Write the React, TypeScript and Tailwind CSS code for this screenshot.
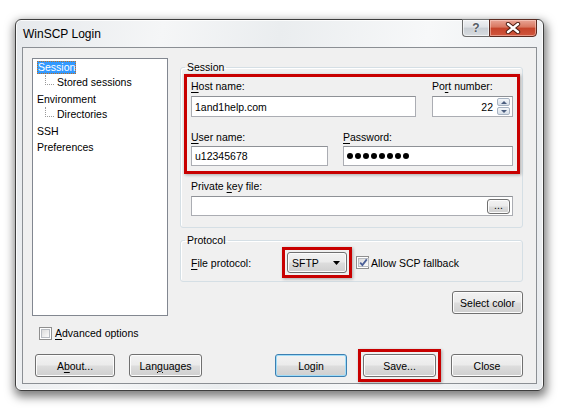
import React from "react";

const face =
  "flex items-center rounded-[3px] border border-[#707070] bg-[linear-gradient(to_bottom,#f2f2f2_0%,#ebebeb_48%,#dddddd_52%,#cfcfcf_100%)] shadow-[inset_0_0_0_1px_#fcfcfc] text-black";
const btn = `${face} justify-center h-[23px]`;

const field =
  "flex items-center bg-white border border-[#abadb3] border-t-[#8e9196] px-[3px]";

function Key({ children }: { children: React.ReactNode }) {
  return <span className="underline underline-offset-[2px]">{children}</span>;
}

function Checkbox({ checked }: { checked?: boolean }) {
  return (
    <span className="w-[13px] h-[13px] shrink-0 border border-[#8f8f8f] bg-white p-[1px] flex">
      <span className="flex-1 border border-[#b8bcc2] bg-[linear-gradient(135deg,#dcdcdc,#fbfbfb)] flex items-center justify-center">
        {checked && (
          <svg width="9" height="9" viewBox="0 0 9 9">
            <path d="M1.2 4.6 L3.4 7 L7.8 1.4" fill="none" stroke="#4a5f97" strokeWidth="1.8" />
          </svg>
        )}
      </span>
    </span>
  );
}

function Arrow({ up }: { up?: boolean }) {
  return (
    <span className="w-[13px] h-[8px] rounded-[2px] border border-[#a7b3c2] bg-[linear-gradient(to_bottom,#f4f7fa,#d6dee8)] flex items-center justify-center">
      <svg width="6" height="3" viewBox="0 0 6 3">
        <path d={up ? "M0 3 L3 0 L6 3 Z" : "M0 0 L3 3 L6 0 Z"} fill="#4a5d7e" />
      </svg>
    </span>
  );
}

function TreeChild({ label }: { label: string }) {
  return (
    <div className="h-[16px] flex items-start pl-[8px]">
      <span className="w-[9px] h-[10px] border-l border-b border-dotted border-[#9a9a9a]" />
      <span className="ml-[3px]">{label}</span>
    </div>
  );
}

export default function App() {
  return (
    <div className="w-[561px] h-[409px] bg-white pl-[15px] pt-[19px] font-['Liberation_Sans',Arial,sans-serif] text-[10.5px] leading-[14px] text-black">
      <div className="w-[529px] h-[372px] rounded-[6px] border border-[#3e3e3e] px-[6px] pb-[6px] flex flex-col bg-[linear-gradient(100deg,#e6e9ec_0%,#f5f6f7_25%,#eaedef_45%,#f7f8f9_70%,#e8ebee_100%)] shadow-[inset_0_0_0_1px_rgba(255,255,255,0.8),1px_4px_10px_2px_rgba(0,0,0,0.5)]">
        {/* title bar */}
        <div className="h-[27px] flex">
          <div className="flex-1 pl-[1px] pt-[7px] text-[12px]">WinSCP Login</div>
          <div className="flex -mt-[1px] h-[18px]">
            <div className="w-[27px] border border-[#6d6d6d] border-r-0 rounded-bl-[4px] bg-[linear-gradient(to_bottom,#f0f1f3_0%,#dfe2e6_45%,#c9ced4_50%,#d8dce0_100%)] shadow-[inset_0_0_0_1px_rgba(255,255,255,0.6)] flex items-center justify-center text-[12px] font-bold text-[#555b63] [text-shadow:0_0_2px_#fff]">
              ?
            </div>
            <div className="w-[48px] border border-[#5a2a20] rounded-br-[4px] bg-[linear-gradient(to_bottom,#e9a596_0%,#d8765f_45%,#c5432a_50%,#d0563d_100%)] shadow-[inset_0_0_0_1px_rgba(255,220,210,0.5)] flex items-center justify-center">
              <svg width="16" height="12" viewBox="0 0 16 12">
                <path d="M3 2 L13 10 M13 2 L3 10" stroke="#4a1c12" strokeWidth="4.4" strokeLinecap="round" />
                <path d="M3 2 L13 10 M13 2 L3 10" stroke="#ffffff" strokeWidth="2.4" strokeLinecap="round" />
              </svg>
            </div>
          </div>
        </div>

        {/* client area */}
        <div className="h-[337px] border border-[#8b8f94] bg-[#f0f0f0] pl-[9px] pt-[10px]">
          <div className="flex items-start">
            {/* left column */}
            <div className="flex flex-col">
              <div className="w-[136px] h-[258px] bg-white border border-[#828790] pl-[4px]">
                <div className="h-[16px] flex items-center">
                  <span className="bg-[#3399ff] text-white px-[1px] leading-[13px] outline-1 outline-dotted outline-[#c07020] -outline-offset-1">
                    Session
                  </span>
                </div>
                <TreeChild label="Stored sessions" />
                <div className="h-[16px] flex items-center">Environment</div>
                <TreeChild label="Directories" />
                <div className="h-[16px] flex items-center">SSH</div>
                <div className="h-[16px] flex items-center">Preferences</div>
              </div>
              <div className="mt-[10px] h-[14px] flex items-center pl-[7px]">
                <Checkbox />
                <span className="ml-[3px]">
                  <Key>A</Key>dvanced options
                </span>
              </div>
            </div>

            {/* right column */}
            <div className="ml-[12px] mt-[2px] w-[343px] flex flex-col">
              <fieldset className="border border-[#d5dfe5] rounded-[3px] shadow-[inset_1px_1px_0_#fff] pl-[3px] pr-[2px] pb-[11px]">
                <legend className="ml-[1px] px-[2px] leading-[14px]">Session</legend>
                <div className="border-[3px] border-[#c80000] px-[4px] pb-[5px] shadow-[1px_1px_3px_rgba(0,0,0,0.3)]">
                  <div className="flex">
                    <div className="w-[225px]">
                      <div className="h-[19px] pt-[2px]">
                        <Key>H</Key>ost name:
                      </div>
                      <div className={`${field} h-[21px]`}>1and1help.com</div>
                    </div>
                    <div className="ml-[16px] w-[81px]">
                      <div className="h-[19px] pt-[2px]">
                        Po<Key>r</Key>t number:
                      </div>
                      <div className={`${field} h-[21px] justify-end pr-[2px]`}>
                        <span>22</span>
                        <span className="ml-[4px] flex flex-col gap-[1px]">
                          <Arrow up />
                          <Arrow />
                        </span>
                      </div>
                    </div>
                  </div>
                  <div className="flex">
                    <div className="w-[137px]">
                      <div className="h-[29px] pt-[13px]">
                        <Key>U</Key>ser name:
                      </div>
                      <div className={`${field} h-[20px]`}>u12345678</div>
                    </div>
                    <div className="ml-[15px] w-[170px]">
                      <div className="h-[29px] pt-[13px]">
                        <Key>P</Key>assword:
                      </div>
                      <div className={`${field} h-[20px] gap-[2px]`}>
                        {[0, 1, 2, 3, 4, 5, 6, 7].map((i) => (
                          <span key={i} className="w-[6px] h-[6px] rounded-full bg-black" />
                        ))}
                      </div>
                    </div>
                  </div>
                </div>
                <div className="ml-[7px] h-[22px] pt-[5px]">
                  Private <Key>k</Key>ey file:
                </div>
                <div className={`${field} ml-[7px] mr-[7px] h-[20px] justify-end pr-[2px]`}>
                  <span className={`${face} justify-center w-[23px] h-[15px] leading-[10px] pb-[3px]`}>...</span>
                </div>
              </fieldset>

              <fieldset className="mt-[6px] border border-[#d5dfe5] rounded-[3px] shadow-[inset_1px_1px_0_#fff] pl-[10px] pb-[3px]">
                <legend className="-ml-[6px] px-[2px] leading-[13px]">Protocol</legend>
                <div className="flex items-center">
                  <span className="w-[91px]">
                    <Key>F</Key>ile protocol:
                  </span>
                  <div className="border-[3px] border-[#c80000] p-[2px] shadow-[1px_1px_3px_rgba(0,0,0,0.3)]">
                    <div className={`${face} w-[60px] h-[21px] justify-between pl-[4px] pr-[6px]`}>
                      <span>SFTP</span>
                      <svg width="7" height="4" viewBox="0 0 7 4">
                        <path d="M0 0 L7 0 L3.5 4 Z" fill="#000" />
                      </svg>
                    </div>
                  </div>
                  <span className="ml-[4px]">
                    <Checkbox checked />
                  </span>
                  <span className="ml-[2px]">Allow SCP fallback</span>
                </div>
              </fieldset>

              <div className="mt-[9px] self-end">
                <div className={`${btn} w-[71px]`}>Select color</div>
              </div>
            </div>
          </div>

          {/* bottom buttons */}
          <div className="mt-[9px] h-[33px] flex items-center pl-[3px]">
            <div className={`${btn} w-[80px]`}>
              A<Key>b</Key>out...
            </div>
            <div className={`${btn} w-[73px] ml-[14px]`}>
              Lan<Key>g</Key>uages
            </div>
            <div className="w-[72px] ml-[73px] h-[23px] flex items-center justify-center rounded-[3px] border border-[#3c7fb1] bg-[linear-gradient(to_bottom,#f2f2f2_0%,#ebebeb_48%,#dddddd_52%,#cfcfcf_100%)] shadow-[inset_0_0_0_1px_#9fdcf8]">
              Login
            </div>
            <div className="ml-[11px] border-[3px] border-[#c80000] p-[2px] shadow-[1px_1px_3px_rgba(0,0,0,0.3)]">
              <div className={`${btn} w-[73px]`}>Save...</div>
            </div>
            <div className={`${btn} w-[72px] ml-[10px]`}>Close</div>
          </div>
        </div>
      </div>
    </div>
  );
}
